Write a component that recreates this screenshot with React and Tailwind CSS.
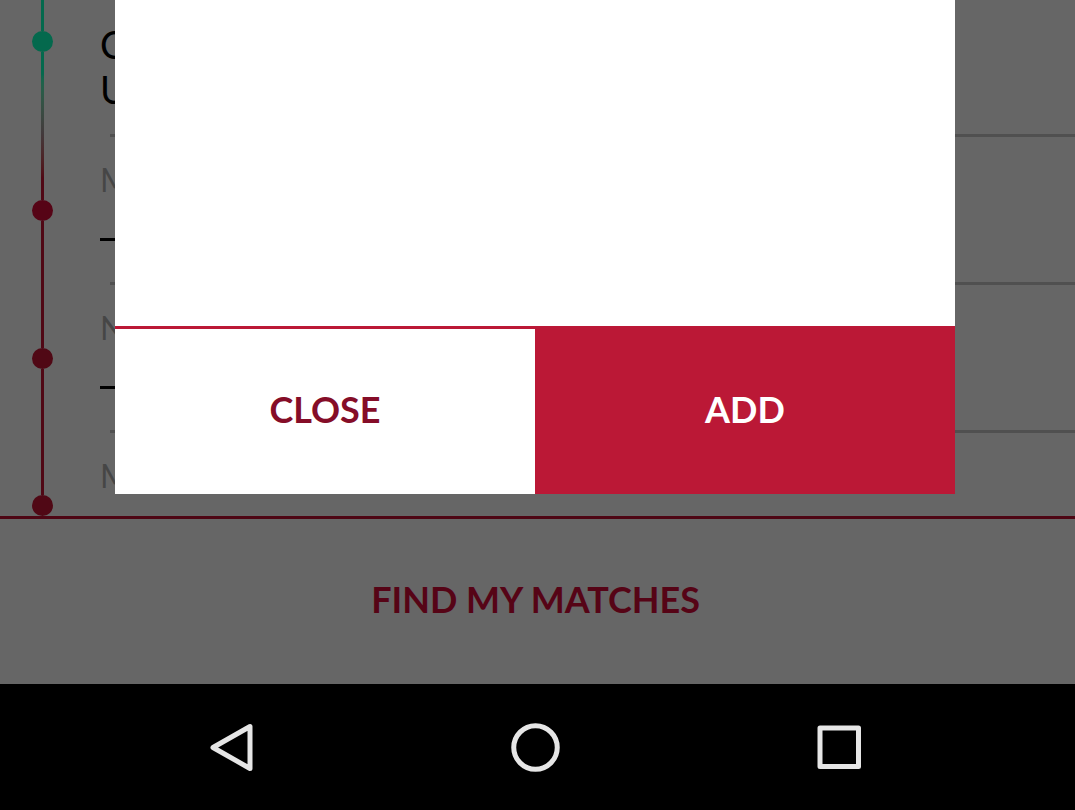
const ROWS = [
  { id: "second", label: "M" },
  { id: "third", label: "N" },
];

function Dot({ className }) {
  return <span className={`size-[21px] shrink-0 rounded-full ${className}`} />;
}

function Timeline() {
  return (
    <div className="ml-8 flex w-[21px] shrink-0 flex-col items-center" aria-hidden="true">
      <span className="h-[31px] w-[3px] bg-[#04694d]" />
      <Dot className="bg-[#04694d]" />
      <span className="h-[148px] w-[3px] bg-linear-to-b from-[#04694d] from-15% via-[#423a3c] via-55% to-[#500815] to-85%" />
      <Dot className="bg-[#560416]" />
      <span className="h-[127px] w-[3px] bg-[#500815]" />
      <Dot className="bg-[#500815]" />
      <span className="w-[3px] flex-1 bg-[#500815]" />
      <Dot className="bg-[#500815]" />
    </div>
  );
}

function Entries() {
  return (
    <ul className="flex-1 pl-[47px]">
      <li className="h-[137px]">
        <p className="h-[134px] pt-[22px] text-[38px] leading-[45px] text-black">
          C<br />U
        </p>
        <div className="ml-[10px] h-[3px] bg-[#505050]" />
      </li>
      {ROWS.map((row) => (
        <li key={row.id} className="flex h-[148px] flex-col">
          <p className="pt-[21px] text-[32px] leading-[44px] text-[#464646]">{row.label}</p>
          <div className="mt-9 h-[3px] w-10 bg-black" />
          <div className="mt-auto ml-[10px] h-[3px] bg-[#505050]" />
        </li>
      ))}
      <li className="h-[83px] pt-[21px] text-[32px] leading-[44px] text-[#464646]">M</li>
    </ul>
  );
}

function Dialog() {
  return (
    <div className="absolute inset-x-0 top-0 pr-[120px] pl-[115px]">
      <div role="dialog" aria-label="Add" className="bg-white">
        <div className="h-[326px]" />
        <div className="flex h-[168px] text-[36px] font-bold">
          <button type="button" className="flex-1 border-t-3 border-[#bb1836] bg-white pb-1.5 text-[#850d28]">
            CLOSE
          </button>
          <button type="button" className="flex-1 border-t-3 border-[#bb1836] bg-[#bb1836] pb-1.5 text-white">
            ADD
          </button>
        </div>
      </div>
    </div>
  );
}

function NavButton({ label, children }) {
  return (
    <button type="button" aria-label={label} className="flex flex-1 items-center justify-center">
      <svg viewBox="0 0 50 50" className="size-[50px]" fill="none" stroke="#e6e6e6" strokeWidth="5" strokeLinejoin="round">
        {children}
      </svg>
    </button>
  );
}

export default function App() {
  return (
    <div className="flex min-h-screen flex-col bg-[#666666] font-['Lato',sans-serif]">
      <main className="relative flex flex-1 flex-col">
        <div className="flex">
          <Timeline />
          <Entries />
        </div>
        <button
          type="button"
          className="h-[168px] flex-1 border-t-3 border-[#4e0614] pr-1 pb-1.5 text-[36px] font-bold text-[#560416]"
        >
          FIND MY MATCHES
        </button>
        <Dialog />
      </main>
      <nav className="flex h-[126px] bg-black pr-[84px] pl-20">
        <NavButton label="Back">
          <path d="M43 4.5 V46.5 L6 25.5 Z" />
        </NavButton>
        <NavButton label="Home">
          <circle cx="24.5" cy="25.5" r="21.75" />
        </NavButton>
        <NavButton label="Recent apps">
          <rect x="6" y="6" width="38.5" height="38.5" />
        </NavButton>
      </nav>
    </div>
  );
}
